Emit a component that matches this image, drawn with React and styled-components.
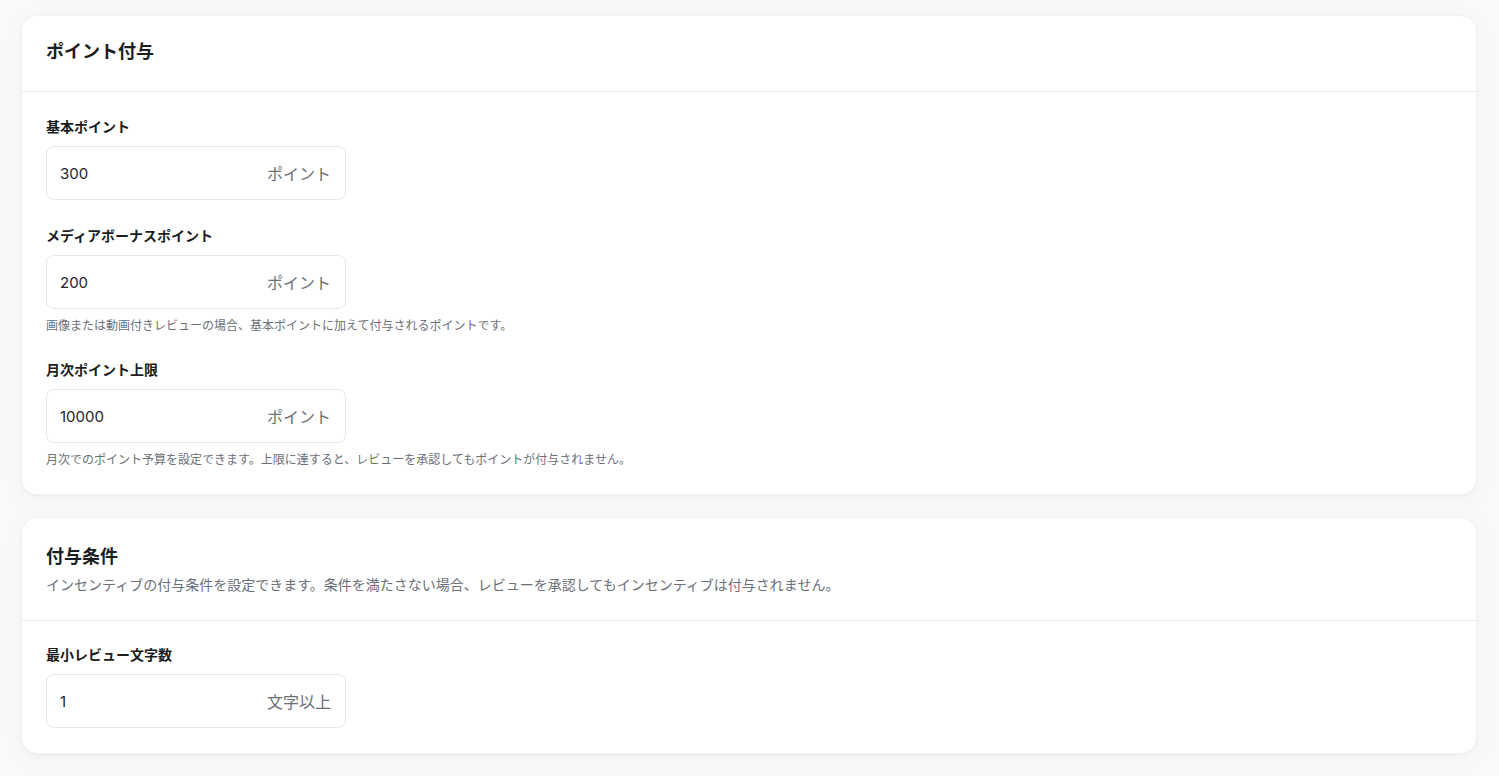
import React from "react";
import styled, { createGlobalStyle } from "styled-components";

const GlobalStyle = createGlobalStyle`
  * { box-sizing: border-box; }
  body {
    margin: 0;
    background: #f8f9fa;
    font-family: Inter, "Noto Sans CJK JP", sans-serif;
    color: #1f2328;
  }
`;

const Page = styled.div`
  display: flex;
  flex-direction: column;
  gap: 22px;
  padding: 15px 22px 22px 21px;
`;

const Card = styled.section`
  background: #fff;
  border: 1px solid #f1f2f4;
  border-radius: 16px;
  box-shadow: 0 1px 3px rgba(0, 0, 0, 0.04), 0 4px 24px rgba(0, 0, 0, 0.03);
`;

const CardHeader = styled.header`
  padding: ${(p) => (p.$withDesc ? "25px 24px 25px" : "22px 24px 25px")};
  border-bottom: 1px solid #e9eaec;
`;

const Title = styled.h2`
  margin: 0;
  font-size: 18px;
  font-weight: 700;
  line-height: 28px;
  color: #1a1d21;
`;

const Desc = styled.p`
  margin: 4px 0 0;
  font-size: 14px;
  line-height: 20px;
  color: #6b7078;
`;

const CardBody = styled.div`
  display: flex;
  flex-direction: column;
  gap: 26px;
  padding: ${(p) => (p.$tight ? "24px 24px 25px" : "25px 24px 26px")};
`;

const Field = styled.div`
  display: flex;
  flex-direction: column;
`;

const Label = styled.label`
  font-size: 14px;
  font-weight: 700;
  line-height: 20px;
  color: #1a1d21;
  margin-bottom: 9px;
`;

const InputBox = styled.div`
  display: flex;
  align-items: center;
  justify-content: space-between;
  width: 300px;
  height: 54px;
  padding: 0 14px 0 13px;
  border: 1px solid #e6e7ea;
  border-radius: 8px;
  background: #fff;
`;

const Value = styled.input`
  border: none;
  outline: none;
  background: transparent;
  width: 150px;
  font-family: Inter, "Noto Sans CJK JP", sans-serif;
  font-size: 15px;
  color: #1f2328;
  padding: 0;
`;

const Suffix = styled.span`
  font-size: 16px;
  color: #6c7178;
`;

const Help = styled.p`
  margin: 9px 0 0;
  font-size: 12px;
  line-height: 16px;
  color: #6b7078;
`;

const NumberField = ({ label, value, suffix, help }) => (
  <Field>
    <Label>{label}</Label>
    <InputBox>
      <Value defaultValue={value} />
      <Suffix>{suffix}</Suffix>
    </InputBox>
    {help && <Help>{help}</Help>}
  </Field>
);

const App = () => {
  return (
    <>
      <GlobalStyle />
      <Page>
        <Card>
          <CardHeader>
            <Title>ポイント付与</Title>
          </CardHeader>
          <CardBody>
            <NumberField label="基本ポイント" value="300" suffix="ポイント" />
            <NumberField
              label="メディアボーナスポイント"
              value="200"
              suffix="ポイント"
              help="画像または動画付きレビューの場合、基本ポイントに加えて付与されるポイントです。"
            />
            <NumberField
              label="月次ポイント上限"
              value="10000"
              suffix="ポイント"
              help="月次でのポイント予算を設定できます。上限に達すると、レビューを承認してもポイントが付与されません。"
            />
          </CardBody>
        </Card>
        <Card>
          <CardHeader $withDesc>
            <Title>付与条件</Title>
            <Desc>
              インセンティブの付与条件を設定できます。条件を満たさない場合、レビューを承認してもインセンティブは付与されません。
            </Desc>
          </CardHeader>
          <CardBody $tight>
            <NumberField label="最小レビュー文字数" value="1" suffix="文字以上" />
          </CardBody>
        </Card>
      </Page>
    </>
  );
};

export default App;
